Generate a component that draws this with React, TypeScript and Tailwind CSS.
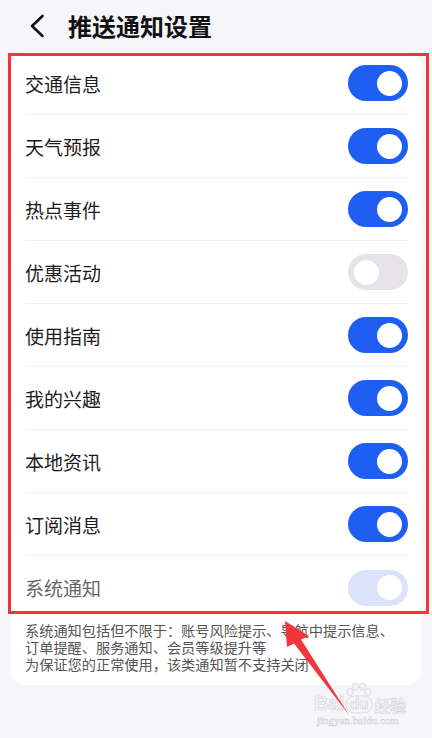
import React from 'react';

type Item = { label: string; on: boolean; disabled?: boolean };

const items: Item[] = [
  { label: '交通信息', on: true },
  { label: '天气预报', on: true },
  { label: '热点事件', on: true },
  { label: '优惠活动', on: false },
  { label: '使用指南', on: true },
  { label: '我的兴趣', on: true },
  { label: '本地资讯', on: true },
  { label: '订阅消息', on: true },
  { label: '系统通知', on: true, disabled: true },
];

function Toggle({ on, disabled }: { on: boolean; disabled?: boolean }) {
  const track = disabled ? 'bg-[#dbe3fb]' : on ? 'bg-[#1f5ef3]' : 'bg-[#e6e3ea]';
  return (
    <div
      className={`flex h-[36px] w-[60px] items-center rounded-full px-[6px] ${track} ${
        on ? 'justify-end' : 'justify-start'
      }`}
    >
      <div className="h-[25px] w-[25px] rounded-full bg-white" />
    </div>
  );
}

// faint "Baidu 经验" stamp in the bottom corner
function Watermark() {
  return (
    <div className="pointer-events-none absolute left-[314px] top-[682px] flex flex-col text-[#f4f4f7]">
      <div className="flex items-end">
        <span className="text-[19.5px] font-bold leading-none font-['Liberation_Sans',sans-serif] [-webkit-text-stroke:0.7px_#d3d3db]">
          Bai
        </span>
        <div className="relative flex h-[31px] w-[30px] items-end justify-center">
          <svg className="absolute inset-0" width="30" height="32" viewBox="0 0 30 32">
            <g fill="#f4f4f7" stroke="#d3d3db" strokeWidth="0.8">
              <ellipse cx="6" cy="10" rx="3" ry="3.6" />
              <ellipse cx="11.5" cy="4.5" rx="3" ry="3.6" />
              <ellipse cx="18.5" cy="4.5" rx="3" ry="3.6" />
              <ellipse cx="24" cy="10" rx="3" ry="3.6" />
              <rect x="2" y="14" width="26" height="17" rx="8" />
            </g>
          </svg>
          <span className="relative mb-[2px] text-[15px] font-bold leading-none font-['Liberation_Sans',sans-serif] [-webkit-text-stroke:0.6px_#d3d3db]">
            du
          </span>
        </div>
        <span className="text-[16px] font-bold leading-none [-webkit-text-stroke:0.6px_#d3d3db]">经验</span>
      </div>
      <span className="ml-[3px] mt-[2px] text-[11px] leading-none font-['Liberation_Serif',serif] [-webkit-text-stroke:0.5px_#d3d3db]">
        jingyan.baidu.com
      </span>
    </div>
  );
}

export default function App() {
  return (
    <div className="relative h-[738px] w-[432px] overflow-hidden bg-[#f6f5fa] font-['Noto_Sans_CJK_SC',sans-serif]">
      {/* Header */}
      <header className="flex h-[52px] items-center">
        <svg className="ml-[29px] h-[24px] w-[16px]" viewBox="0 0 16 24" fill="none">
          <path d="M13.5 2 L3 12 L13.5 22" stroke="#111" strokeWidth="2.6" strokeLinecap="round" strokeLinejoin="round" />
        </svg>
        <h1 className="ml-[23px] text-[24px] font-bold leading-none text-[#111]">推送通知设置</h1>
      </header>

      {/* Settings card */}
      <section className="mx-[10px] rounded-2xl bg-white">
        {items.map((item, i) => (
          <div
            key={item.label}
            className={`ml-[15px] mr-[14px] flex h-[63px] items-center justify-between ${
              i < items.length - 1 ? 'border-b border-[#f1f0f3]' : ''
            }`}
          >
            <span className={`text-[19px] leading-none ${item.disabled ? 'text-[#666]' : 'text-[#1c1c1c]'}`}>
              {item.label}
            </span>
            <Toggle on={item.on} disabled={item.disabled} />
          </div>
        ))}
        <div className="px-[15px] pb-[12px] pt-[3px] text-[14.2px] leading-[17px] text-[#555]">
          <p className="whitespace-nowrap">系统通知包括但不限于：账号风险提示、导航中提示信息、</p>
          <p className="whitespace-nowrap">订单提醒、服务通知、会员等级提升等</p>
          <p className="whitespace-nowrap">为保证您的正常使用，该类通知暂不支持关闭</p>
        </div>
      </section>

      <Watermark />

      {/* Annotation frame */}
      <div className="pointer-events-none absolute left-[8px] top-[53px] h-[561px] w-[421px] border-[3px] border-[#f2353b]" />

      {/* Annotation arrow */}
      <svg className="pointer-events-none absolute left-0 top-0" width="432" height="738" viewBox="0 0 432 738">
        <polygon points="285,621 309,636 301,639.5 349,715 294,643.5 287,647" fill="#f2353b" />
      </svg>
    </div>
  );
}
